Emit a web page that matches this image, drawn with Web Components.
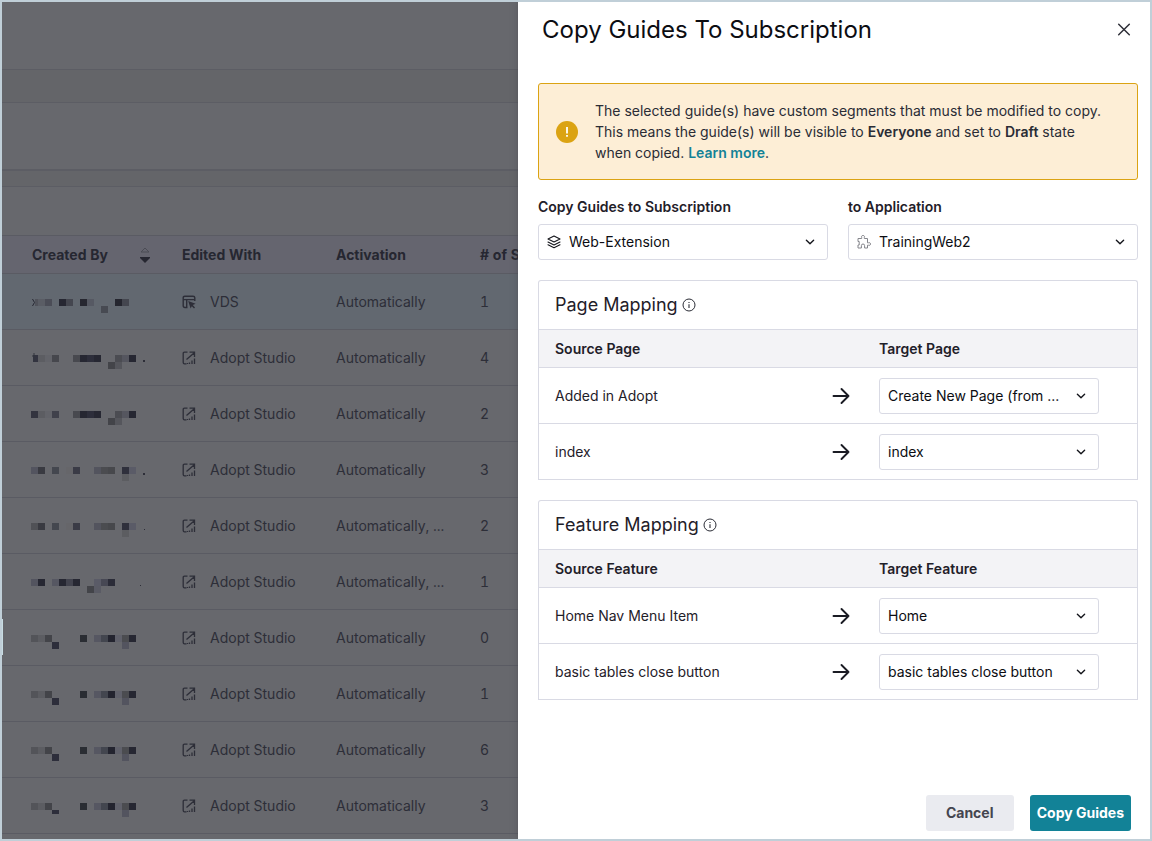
<!DOCTYPE html>
<html lang="en">
<head>
<meta charset="utf-8">
<meta name="viewport" content="width=device-width, initial-scale=1">
<title>Copy Guides To Subscription</title>
<style>
  html, body { margin: 0; height: 100%; }
  body { font: 14px/20px Inter, "Liberation Sans", sans-serif; color: #1f2029; background: #fff; }
</style>
</head>
<body>
<app-shell>
  <guide-list slot="page"></guide-list>
  <side-drawer heading="Copy Guides To Subscription">
    <alert-banner>The selected guide(s) have custom segments that must be modified to copy. This means the guide(s) will be visible to <b>Everyone</b> and set to <b>Draft</b> state when copied. <a href="#learn-more">Learn more</a>.</alert-banner>
    <field-pair>
      <ui-select label="Copy Guides to Subscription" value="Web-Extension">
        <svg slot="icon" width="14" height="14" viewBox="0 0 14 14" fill="none" stroke="#14151b" stroke-width="1.100" stroke-linejoin="round" stroke-linecap="round"><path d="M7 1 13 4 7 7 1 4Z M1 7l6 3 6-3 M1 9.800l6 3 6-3"/></svg>
      </ui-select>
      <ui-select label="to Application" value="TrainingWeb2">
        <svg slot="icon" width="16" height="14" viewBox="0 0 16 14" fill="none" stroke="#85868c"><path d="M1 3.500H4.700V2.600A1.500 1.500 0 1 1 7.300 2.600V3.500H10.500V7.800H11.400A1.400 1.400 0 1 1 11.400 10.200H10.500V13H7.600V10.600A1.500 1.500 0 0 0 4.400 10.600V13H1V10H2.200V6.500H1Z"/></svg>
      </ui-select>
    </field-pair>
    <mapping-card kind="Page" rows='[["Added in Adopt","Create New Page (from ..."],["index","index"]]'></mapping-card>
    <mapping-card kind="Feature" rows='[["Home Nav Menu Item","Home"],["basic tables close button","basic tables close button"]]'></mapping-card>
    <ui-button slot="footer">Cancel</ui-button>
    <ui-button slot="footer" variant="primary">Copy Guides</ui-button>
  </side-drawer>
</app-shell>

<script>
const define = (name, render) => customElements.define(name, class extends HTMLElement {
  connectedCallback() {
    if (this.shadowRoot) return;
    this.attachShadow({ mode: 'open' }).innerHTML = render(this);
  }
});

define('app-shell', () => `
<style>
  :host { display: flex; box-sizing: border-box; height: 100vh; border: 2px solid #c0cfd8; position: relative; overflow: hidden; }
  ::slotted([slot=page]) { flex: 1; min-width: 0; }
  .handle { position: absolute; left: 0; bottom: 22%; width: 1px; height: 36px; background: #c8dce3; }
</style>
<slot name="page"></slot><slot></slot><div class="handle"></div>`);

/* Redacted author names: [column, shade, line] tiles on a 7px grid. */
const tail = [[6,'#48494f'],[7,'#262732'],[8,'#2d2e3b'],[9,'#262732'],[11,'#434449',1],[12,'#55565c',1],[12,'#4b4c52'],[13,'#55565f'],[14,'#262732']];
const speckle = [[1,'#393a41'],[3,'#44474f'],[5,'#66666a'],[6,'#3a3b46'],[9,'#53545e'],[10,'#4b4c50'],[11,'#47484c'],[13,'#2f303c'],[13,'#5c5d61',1],[14,'#5a5b67']];
const common = [[0,'#535459'],[1,'#5c5d62'],[2,'#434449'],[3,'#2d2e3b',1],[7,'#2a2d33'],[9,'#565762'],[10,'#43464f'],[11,'#23242f'],[12,'#60616b'],[13,'#4b4c50'],[13,'#53545f',1],[14,'#262732']];
const masks = [
  { tiles: [[0,'#50525a'],[1,'#5a5d65'],[2,'#4b4d57'],[4,'#262732'],[5,'#44464f'],[7,'#262730'],[8,'#565963'],[10,'#474a52',1],[12,'#25262f'],[13,'#44464f']],
    extra: '<path d="M0 8h4v7H0z" fill="#626870"/><path d="m1.500 8 2 3.500-2 3.500" fill="none" stroke="#262732"/>' },
  { tiles: [[0,'#333440'],[1,'#5c5d62'],[2,'#63646a'],[3,'#46474d'], ...tail], extra: '<path d="M0 8h2v7H0z" fill="#67686d"/><path d="M1 9h3M3 6v9" stroke="#33343f"/>', dot: [112, 13, 2] },
  { tiles: [[0,'#33343f'],[1,'#5c5d62'],[2,'#63646a'],[3,'#40414b'], ...tail] },
  { tiles: [[0,'#53545f'], ...speckle], dot: [112, 14, 2] },
  { tiles: [[0,'#505156'], ...speckle], dot: [113, 14, 1] },
  { tiles: [[0,'#53545f'],[1,'#262732'],[3,'#565762'],[4,'#262732'],[5,'#42434e'],[6,'#262732'],[8,'#434449',1],[9,'#5a5b65',1],[9,'#5a5b67'],[10,'#474854'],[11,'#2b2c38']], dot: [109, 14, 1] },
  { tiles: common }, { tiles: common }, { tiles: common },
  { tiles: common, extra: '<path d="M21 19h7v3h-7z" fill="#67686d"/>' }
];
const maskSvg = ({ tiles, extra = '', dot }) => `<svg class="mask" width="116" height="22" viewBox="1 0 116 22">${
  tiles.map(([c, f, l]) => `<rect x="${c * 7}" y="${l ? 15 : 8}" width="7" height="7" fill="${f}"/>`).join('')}${extra}${
  dot ? `<rect x="${dot[0]}" y="${dot[1]}" width="${dot[2]}" height="${dot[2]}" fill="#2d2e38"/>` : ''}</svg>`;

const studioIcon = `<svg width="14" height="14" viewBox="0 0 14 14" fill="none" stroke="#2d2e38" stroke-width="1.300"><path d="M5.500 1.200H2.500Q1.200 1.200 1.200 2.500V11.500Q1.200 12.800 2.500 12.800H4.500M4.500 8.500 12.300 1.700M7.500 1.200H12.500V6M7.500 13V11.500M10 13V9.500M12.500 13V7.500M5.500 13V12"/></svg>`;
const vdsIcon = `<svg width="14" height="14" viewBox="0 0 14 14" fill="none" stroke="#2d2e38" stroke-width="1.400"><path d="M5.500 12.500H3Q1.200 12.500 1.200 10.800V2.800Q1.200 1.200 2.800 1.200H11Q12.800 1.200 12.800 2.800V6M1.200 4.600H12.800M4.700 4.600V12.500"/><path d="M6.200 6 13.600 8.700 10.800 10 13 12.500 12 13.500 9.800 11.200 8.600 13.400Z" fill="#2d2e38" stroke="none"/></svg>`;

define('guide-list', () => {
  const data = [['VDS','Automatically',1],['Adopt Studio','Automatically',4],['Adopt Studio','Automatically',2],['Adopt Studio','Automatically',3],
    ['Adopt Studio','Automatically, ...',2],['Adopt Studio','Automatically, ...',1],['Adopt Studio','Automatically',0],['Adopt Studio','Automatically',1],
    ['Adopt Studio','Automatically',6],['Adopt Studio','Automatically',3]];
  return `
<style>
  :host { display: block; overflow: hidden; background: #67686d; color: #2d2e38; }
  .bar { box-sizing: border-box; height: 68px; border-bottom: 1px solid #5c5d64; }
  .gap { height: 33px; background: #646569; }
  .deep { border-bottom-width: 2px; }
  .strip { height: 16px; }
  .tools { height: 48px; }
  table { width: 100%; border-collapse: separate; border-spacing: 0; table-layout: fixed; white-space: nowrap; font-variant-numeric: tabular-nums; }
  th { box-sizing: border-box; height: 39px; padding: 0 16px; border: solid #5a5b63; border-width: 1px 0; background: #65656f; font-weight: 700; text-align: left; color: #262731; }
  td { box-sizing: border-box; height: 56px; padding: 0 16px; border-bottom: 1px solid #5a5b63; }
  tr.current td { background: #626870; }
  th:first-child, td:first-child { padding-left: 30px; }
  th:last-child, td:last-child { padding-right: 0; overflow: hidden; }
  .by { width: 164px; } .with { width: 154px; } .act { width: 144px; }
  .sort { display: flex; justify-content: space-between; align-items: center; }
  .tool { display: flex; align-items: center; gap: 14px; }
  svg { display: block; }
  .mask { overflow: visible; }
</style>
<div class="bar"></div><div class="bar gap"></div><div class="bar deep"></div><div class="bar gap strip"></div><div class="tools"></div>
<table>
  <colgroup><col class="by"><col class="with"><col class="act"><col></colgroup>
  <thead><tr>
    <th scope="col"><div class="sort">Created By<svg width="10" height="18" viewBox="0 0 10 18"><path d="M1 6 5 2 9 6Z" fill="none" stroke="#4b4c55"/><path d="M0 11H10V12L5 17 0 12Z" fill="#262731"/></svg></div></th>
    <th scope="col">Edited With</th><th scope="col">Activation</th><th scope="col"># of S</th>
  </tr></thead>
  <tbody>${data.map(([tool, act, n], i) => `<tr${i ? '' : ' class="current"'}><td>${maskSvg(masks[i])}</td><td><div class="tool">${i ? studioIcon : vdsIcon}${tool}</div></td><td>${act}</td><td>${n}</td></tr>`).join('')}</tbody>
</table>`;
});

define('side-drawer', el => `
<style>
  :host { display: flex; flex-direction: column; flex: 0 0 auto; width: 632px; max-width: 100%; background: #fff; box-shadow: 0 0 6px #4a4b5299; position: relative; }
  header { display: flex; justify-content: space-between; align-items: center; padding: 12px 16px 0 24px; }
  h1 { margin: 0; font-size: 24px; line-height: 32px; font-weight: 400; color: #0c0d12; }
  button { display: grid; place-items: center; width: 20px; height: 20px; padding: 0; border: 0; background: none; }
  main { display: flex; flex-direction: column; flex: 1; padding: 37px 12px 0 20px; }
  footer { display: flex; justify-content: flex-end; gap: 16px; padding: 8px 19px; }
</style>
<header><h1>${el.getAttribute('heading')}</h1>
<button type="button" aria-label="Close"><svg width="14" height="14" viewBox="0 0 14 14" stroke="#2f3039" stroke-width="1.500" stroke-linecap="round"><path d="M1.700 1.200 12.300 11.800M12.300 1.200 1.700 11.800"/></svg></button></header>
<main><slot></slot></main>
<footer><slot name="footer"></slot></footer>`);

define('alert-banner', () => `
<style>
  :host { display: flex; align-items: center; gap: 16px; padding: 16px 28px 16px 16px; border: 1px solid #dba313; border-radius: 3px; background: #fdeed6; line-height: 21px; color: #2a2c35; }
  svg { flex: none; }
  ::slotted(b) { font-weight: 600; }
  ::slotted(a) { font-weight: 600; color: #128297; text-decoration: none; }
</style>
<svg width="24" height="24" viewBox="0 0 24 24"><circle cx="12" cy="12" r="11" fill="#dba313"/><path d="M11.100 7h1.800v6.500h-1.800zM11.100 15h1.800v1.800h-1.800z" fill="#fff"/></svg>
<div><slot></slot></div>`);

define('field-pair', () => `
<style>:host { display: grid; grid-template-columns: 1fr 1fr; gap: 20px; margin-top: 16px; }</style><slot></slot>`);

define('ui-select', el => {
  const label = el.getAttribute('label');
  const hidden = el.hasAttribute('compact');
  const icon = el.querySelector('[slot=icon]');
  return `
<style>
  :host { display: block; min-width: 0; }
  label { display: block; margin-bottom: 6px; line-height: 22px; font-weight: 600; }
  .box { display: grid; align-items: center; }
  .box > * { grid-area: 1 / 1; }
  select { appearance: none; box-sizing: border-box; width: 100%; height: 36px; margin: 0; padding: 0 32px 0 ${icon ? 30 : 8}px; border: 1px solid #d9dae4; border-radius: 3px; background: #fff; font: inherit; color: #0c0d12; }
  .lead { display: flex; padding-left: 9px; pointer-events: none; }
  .chevron { justify-self: end; margin-right: 12px; pointer-events: none; }
</style>
${hidden ? '' : `<label for="s">${label}</label>`}
<div class="box"><select id="s"${hidden ? ` aria-label="${label}"` : ''}><option>${el.getAttribute('value')}</option></select>
<span class="lead"><slot name="icon"></slot></span>
<svg class="chevron" width="12" height="12" viewBox="0 0 12 12" fill="none" stroke="#14151b" stroke-width="1.400" stroke-linecap="round" stroke-linejoin="round"><path d="M2.400 4.300 6 7.800 9.600 4.300"/></svg></div>`;
});

define('mapping-card', el => {
  const kind = el.getAttribute('kind');
  return `
<style>
  :host { display: block; margin-top: 20px; border: 1px solid #d9dae4; border-bottom: 0; border-radius: 3px 3px 0 0; }
  h2 { display: flex; align-items: center; gap: 4px; height: 48px; margin: 0; padding: 0 16px; font-size: 18px; line-height: 24px; font-weight: 400; }
  table { width: 100%; border-collapse: separate; border-spacing: 0; table-layout: fixed; }
  th, td { box-sizing: border-box; padding: 0 16px; text-align: left; border-bottom: 1px solid #d9dae4; }
  th, thead td { height: 39px; border-top: 1px solid #d9dae4; background: #f3f3f6; font-weight: 600; }
  td { height: 56px; }
  .arrow { width: 44px; } .target { width: 274px; }
  td.to { padding: 0; }
  td.to svg { display: block; margin: 0 auto; }
  ui-select { width: 220px; }
</style>
<h2>${kind} Mapping<svg width="14" height="14" viewBox="0 0 14 14" fill="none" stroke="#2a2c35"><circle cx="7" cy="7" r="6"/><path d="M7 6.200V10M7 4v1.100" stroke-width="1.100"/></svg></h2>
<table>
  <colgroup><col><col class="arrow"><col class="target"></colgroup>
  <thead><tr><th scope="col">Source ${kind}</th><td></td><th scope="col">Target ${kind}</th></tr></thead>
  <tbody>${JSON.parse(el.getAttribute('rows')).map(([from, to]) => `<tr><td>${from}</td><td class="to"><svg width="18" height="18" viewBox="0 0 18 18" fill="none" stroke="#1a1b23" stroke-width="1.900" stroke-linecap="round" stroke-linejoin="round"><path d="M1.500 9H16.500M9.500 2 16.500 9 9.500 16"/></svg></td><td><ui-select compact label="Target for ${from}" value="${to}"></ui-select></td></tr>`).join('')}</tbody>
</table>`;
});

define('ui-button', el => {
  const primary = el.getAttribute('variant') === 'primary';
  return `
<style>
  :host { display: block; }
  button { min-width: 88px; height: 36px; padding: 0 ${primary ? 7 : 16}px; border: 0; border-radius: 3px; font: inherit; font-weight: 700; color: ${primary ? '#fff' : '#44454f'}; background: ${primary ? '#128297' : '#eaebf0'}; }
</style><button type="button"><slot></slot></button>`;
});
</script>
</body>
</html>
